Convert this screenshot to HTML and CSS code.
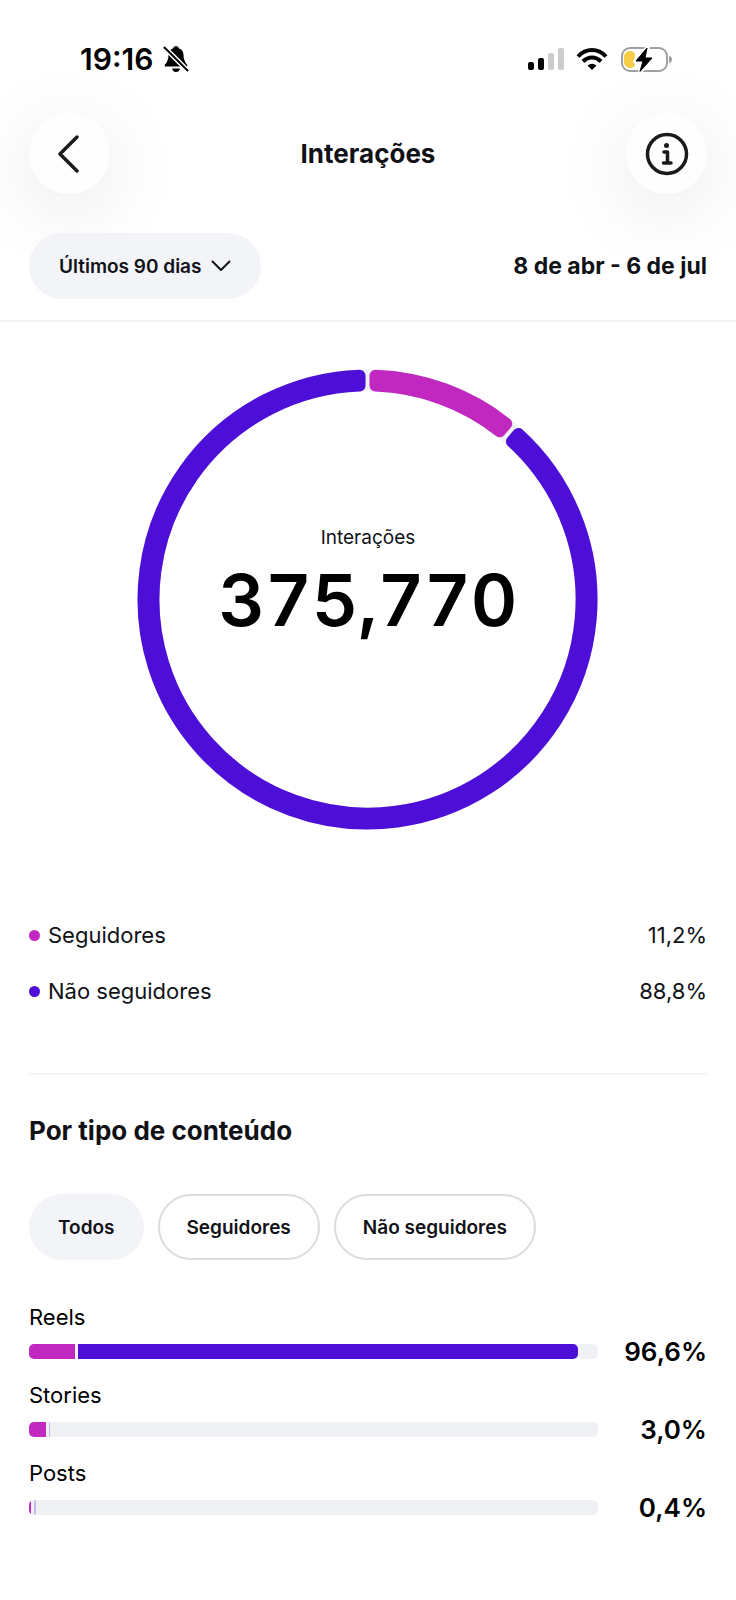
FILE: index.html
```html
<!doctype html>
<html lang="pt-br">
<head>
    <meta charset="UTF-8">
    <meta name="viewport" content="width=device-width, initial-scale=1.0">
    <title>Interações</title>
    <link rel="stylesheet" href="styles.css">
</head>
<body>
<div class="status-bar">
    <div class="status-left">
        <span class="clock">19:16</span>
        <svg width="26" height="28" viewBox="0 0 26 28" aria-hidden="true">
            <path d="M3 21.500Q1 21.500 2 19.500Q5.500 16 5.500 9.500Q6 4.500 10 3.500Q10.500 1 13 1Q15.500 1 16 3.500Q20 4.500 20.500 9.500Q20.500 16 24 19.500Q25 21.500 23 21.500Z"/>
            <path d="M9 23.500h8q-1 3.500-4 3.500t-4-3.500z"/>
            <path d="M0 1 25 26" stroke="#fff" stroke-width="5"/>
            <path d="M1.500 2.500 24.500 25.500" stroke="#000" stroke-width="2" stroke-linecap="round"/>
        </svg>
    </div>
    <div class="status-right">
        <svg width="36" height="24" viewBox="0 0 36 24" aria-hidden="true">
            <rect x="0" y="15" width="6" height="8" rx="2"/>
            <rect x="10" y="11" width="6" height="12" rx="2"/>
            <rect x="20" y="6" width="6" height="17" rx="2" fill="#ccc"/>
            <rect x="30" y="1" width="6" height="22" rx="2" fill="#ccc"/>
        </svg>
        <svg width="32" height="24" viewBox="0 0 32 24" fill="none" stroke="#000" stroke-width="4" aria-hidden="true">
            <path d="M2 9.500Q8 3 16 3T30 9.500"/>
            <path d="M7 14.500Q11 10.500 16 10.500T25 14.500"/>
            <path d="M11.500 18.500Q16 15 20.500 18.500L16 23Z" fill="#000" stroke="none"/>
        </svg>
        <svg width="52" height="28" viewBox="0 0 52 28" aria-hidden="true">
            <rect x="2" y="3" width="45" height="23" rx="8" fill="none" stroke="#a0a0a2" stroke-width="2"/>
            <path d="M49 11q3 .5 3 3.500t-3 3.500z" fill="#a0a0a2"/>
            <path d="M9.500 6H11q4 1 4 4 0 2-1 4.500 1 2 1 4 0 4-4 4.500H9.500Q4 22 4 17v-5Q4 7 9.500 6z" fill="#f7cd46"/>
            <path d="M28 2 15 16.500h7L20 27 33 12.500h-7z" stroke="#fff" stroke-width="4" stroke-linejoin="round"/>
            <path d="M27 3 16 16h7l-3 10.500L32 13h-7z" stroke="#000" stroke-linejoin="round"/>
        </svg>
    </div>
</div>

<header class="top-bar">
    <button class="round-button" type="button" aria-label="Voltar">
        <svg width="24" height="40" viewBox="0 0 24 40" fill="none" stroke="#1a1a1c" stroke-width="3.500" stroke-linecap="round" stroke-linejoin="round">
            <path d="M19 3 2 20l17 17"/>
        </svg>
    </button>
    <h1>Interações</h1>
    <button class="round-button" type="button" aria-label="Informações">
        <svg width="44" height="44" viewBox="0 0 44 44" fill="none" stroke="#1a1a1c" stroke-linecap="round" stroke-linejoin="round">
            <circle cx="22" cy="22" r="19.500" stroke-width="3.500"/>
            <circle cx="21.500" cy="13.500" r="2.500" fill="#1a1a1c" stroke="none"/>
            <path d="M19 20h3.500v11M18.500 31h7.500" stroke-width="3.500"/>
        </svg>
    </button>
</header>

<div class="period">
    <div class="period-select">
        <select aria-label="Período">
            <option>Últimos 90 dias</option>
        </select>
        <svg width="20" height="12" viewBox="0 0 20 12" fill="none" stroke="#101217" stroke-width="2" stroke-linecap="round" stroke-linejoin="round" aria-hidden="true">
            <path d="M1.500 1.500 10 10l8.500-8.500"/>
        </svg>
    </div>
    <strong class="period-dates">8 de abr - 6 de jul</strong>
</div>

<main>
    <section class="chart">
        <svg class="ring" viewBox="-231 -231 462 462" aria-hidden="true">
            <circle r="219.500" fill="none" stroke="#f0f1f5" stroke-width="22"/>
            <path class="ring-followers" d="M8-224.360A224.500 224.500 0 0 1 139-176.290L132.540-168.650A214.500 214.500 0 0 0 8-214.350Z"/>
            <path class="ring-others" d="M151.210-165.950A224.500 224.500 0 1 1-8-224.360V-214.350A214.500 214.500 0 1 0 144.740-158.310Z"/>
        </svg>
        <div class="chart-total">
            <span class="chart-label">Interações</span>
            <span class="chart-number">375,770</span>
        </div>
    </section>

    <ul class="legend">
        <li><span class="dot dot-followers"></span>Seguidores<span class="legend-value">11,2%</span></li>
        <li><span class="dot dot-others"></span>Não seguidores<span class="legend-value">88,8%</span></li>
    </ul>

    <section class="content-type">
        <h2>Por tipo de conteúdo</h2>
        <div class="chips">
            <button class="chip active" type="button">Todos</button>
            <button class="chip" type="button">Seguidores</button>
            <button class="chip" type="button">Não seguidores</button>
        </div>

        <div class="bar-item">
            <p>Reels</p>
            <div class="bar-row">
                <div class="track">
                    <div class="fill-followers" style="width: 8%"></div>
                    <div class="fill-others" style="width: 88%"></div>
                </div>
                <span class="bar-value">96,6%</span>
            </div>
        </div>
        <div class="bar-item">
            <p>Stories</p>
            <div class="bar-row">
                <div class="track">
                    <div class="fill-followers" style="width: 3%"></div>
                    <div class="fill-others faint" style="width: 1px"></div>
                </div>
                <span class="bar-value">3,0%</span>
            </div>
        </div>
        <div class="bar-item">
            <p>Posts</p>
            <div class="bar-row">
                <div class="track">
                    <div class="fill-followers" style="width: 2px"></div>
                    <div class="fill-others faint" style="width: 2px"></div>
                </div>
                <span class="bar-value">0,4%</span>
            </div>
        </div>
    </section>
</main>
</body>
</html>
```
FILE: styles.css
```css
* {
    box-sizing: border-box;
}
body {
    margin: 0;
    background-color: #fff;
    color: #101217;
    font-family: Inter, "Liberation Sans", sans-serif;
    font-size: 22px;
}
h1, h2, p, ul {
    margin: 0;
    padding: 0;
}
button, select {
    font-family: inherit;
    color: inherit;
    cursor: pointer;
}
svg {
    display: block;
    flex-shrink: 0;
}
.status-bar {
    display: flex;
    justify-content: space-between;
    align-items: center;
    padding: 40px 64px 0 80px;
    height: 78px;
    color: #000;
}
.status-left {
    display: flex;
    align-items: center;
    gap: 10px;
}
.clock {
    font-size: 30px;
    font-weight: 600;
}
.status-right {
    display: flex;
    align-items: center;
    gap: 12px;
}
.top-bar {
    display: flex;
    justify-content: space-between;
    align-items: center;
    padding: 35px 29px 0;
}
.round-button {
    display: flex;
    align-items: center;
    justify-content: center;
    width: 81px;
    height: 81px;
    padding: 0;
    border: none;
    border-radius: 50%;
    background-color: #fefefe;
    box-shadow: 0 16px 80px rgba(0, 0, 0, 0.1);
}
h1, h2 {
    font-size: 26px;
    font-weight: 700;
    line-height: 32px;
}
.period {
    display: flex;
    justify-content: space-between;
    align-items: center;
    padding: 39px 29px 21px;
    border-bottom: 2px solid #f0f1f5;
}
.period-select {
    position: relative;
    display: flex;
    align-items: center;
}
.period-select select {
    height: 66px;
    padding: 0 59px 0 30px;
    appearance: none;
    border: none;
    border-radius: 33px;
    background-color: #f3f4f7;
    font-size: 19px;
    font-weight: 600;
}
.period-select svg {
    position: absolute;
    right: 30px;
    pointer-events: none;
}
.period-dates {
    font-size: 23px;
    font-weight: 700;
}
main {
    padding: 47px 29px 80px;
}
.chart {
    display: grid;
    place-items: center;
}
.ring, .chart-total {
    grid-area: 1 / 1;
}
.ring {
    width: 68%;
}
.ring path {
    stroke-width: 12;
    stroke-linejoin: round;
}
.ring-followers {
    fill: #c028c0;
    stroke: #c028c0;
}
.ring-others {
    fill: #4d0fd7;
    stroke: #4d0fd7;
}
.chart-total {
    display: flex;
    flex-direction: column;
    align-items: center;
    padding-bottom: 24px;
}
.chart-label {
    font-size: 19px;
    line-height: 24px;
}
.chart-number {
    color: #000;
    font-size: 72px;
    font-weight: 600;
    font-variant-numeric: tabular-nums;
    line-height: 100px;
}
.legend {
    display: grid;
    gap: 28px;
    margin-top: 91px;
    padding-bottom: 68px;
    border-bottom: 2px solid #f3f4f7;
    list-style: none;
    line-height: 28px;
}
.legend li {
    display: flex;
    align-items: center;
}
.legend-value {
    margin-left: auto;
}
.dot {
    width: 11px;
    height: 11px;
    margin-right: 8px;
    border-radius: 50%;
}
.dot-followers, .fill-followers {
    background-color: #c028c0;
}
.dot-others, .fill-others {
    background-color: #4d0fd7;
}
.content-type {
    padding-top: 40px;
}
.chips {
    display: flex;
    gap: 14px;
    margin: 47px 0 41px;
}
.chip {
    height: 66px;
    padding: 0 27px;
    border: 2px solid #dcdcde;
    border-radius: 33px;
    background-color: #fff;
    font-size: 19px;
    font-weight: 600;
}
.chip.active {
    border-color: #f3f4f7;
    background-color: #f3f4f7;
}
.bar-item {
    margin-bottom: 9px;
    color: #000;
}
.bar-item p {
    line-height: 32px;
}
.bar-row {
    display: flex;
    align-items: center;
    line-height: 37px;
}
.track {
    display: flex;
    flex: 1;
    gap: 3px;
    height: 15px;
    overflow: hidden;
    border-radius: 5px;
    background-color: #f0f1f5;
}
.fill-others {
    border-radius: 0 5px 5px 0;
}
.fill-others.faint {
    opacity: 0.25;
}
.bar-value {
    width: 109px;
    font-size: 26px;
    font-weight: 600;
    text-align: right;
}
```
